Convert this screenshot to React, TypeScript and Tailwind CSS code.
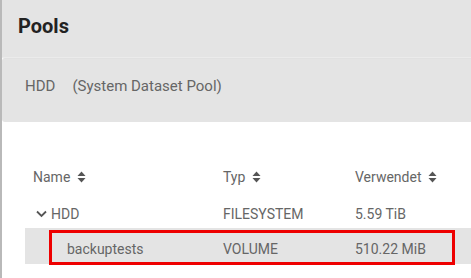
const font = { fontFamily: "Roboto, 'Noto Sans', sans-serif" };

function SortIcon() {
  return (
    <svg width="9" height="12" viewBox="0 0 9 12" className="ml-[7px] inline-block" fill="#555">
      <path d="M4.5 0.5 L8.5 5 L0.5 5 Z" />
      <path d="M4.5 11.5 L8.5 7 L0.5 7 Z" />
    </svg>
  );
}

function Chevron() {
  return (
    <svg width="11" height="8" viewBox="0 0 11 8" className="mr-[4px]" fill="none" stroke="#555" strokeWidth="1.8">
      <path d="M1 1.5 L5.5 6 L10 1.5" />
    </svg>
  );
}

const rows = [
  { name: "HDD", type: "FILESYSTEM", used: "5.59 TiB", parent: true },
  { name: "backuptests", type: "VOLUME", used: "510.22 MiB", parent: false },
];

export default function App() {
  return (
    <div
      className="w-[471px] h-[278px] bg-white border-l-2 border-[#b9b9b9] overflow-hidden text-[#666]"
      style={font}
    >
      <div className="h-[57px] bg-[#e4e4e4] flex items-center pl-[16px] pb-[6px] shadow-[0_1px_1px_rgba(0,0,0,0.08)] relative z-10">
        <h1 className="text-[20px] font-bold text-[#222]">Pools</h1>
      </div>
      <div className="h-[64px] mt-[1px] bg-[#e4e4e4] rounded-bl-[3px] rounded-tl-[3px] flex items-center pl-[23px] pb-[8px] text-[15px]">
        <span>HDD</span>
        <span className="ml-[17px]">(System Dataset Pool)</span>
      </div>

      <div className="mt-[40px] ml-[23px] text-[14px]">
        <div className="flex items-center h-[30px]">
          <div className="w-[198px] pl-[8px] flex items-center">
            Name
            <SortIcon />
          </div>
          <div className="w-[132px] flex items-center">
            Typ
            <SortIcon />
          </div>
          <div className="flex items-center">
            Verwendet
            <SortIcon />
          </div>
        </div>
        {rows.map((r) =>
          r.parent ? (
            <div key={r.name} className="flex items-center h-[36px] pt-[8px]">
              <div className="w-[198px] pl-[11px] flex items-center">
                <Chevron />
                {r.name}
              </div>
              <div className="w-[132px]">{r.type}</div>
              <div>{r.used}</div>
            </div>
          ) : (
            <div key={r.name} className="relative flex items-center h-[36px] pt-[6px] bg-[#e4e4e4]">
              <div className="w-[198px] pl-[42px]">{r.name}</div>
              <div className="w-[132px]">{r.type}</div>
              <div>{r.used}</div>
              <div className="absolute left-[24px] right-[16px] top-[2px] bottom-[-1px] border-[3px] border-[#ee0000]" />
            </div>
          )
        )}
      </div>
    </div>
  );
}
